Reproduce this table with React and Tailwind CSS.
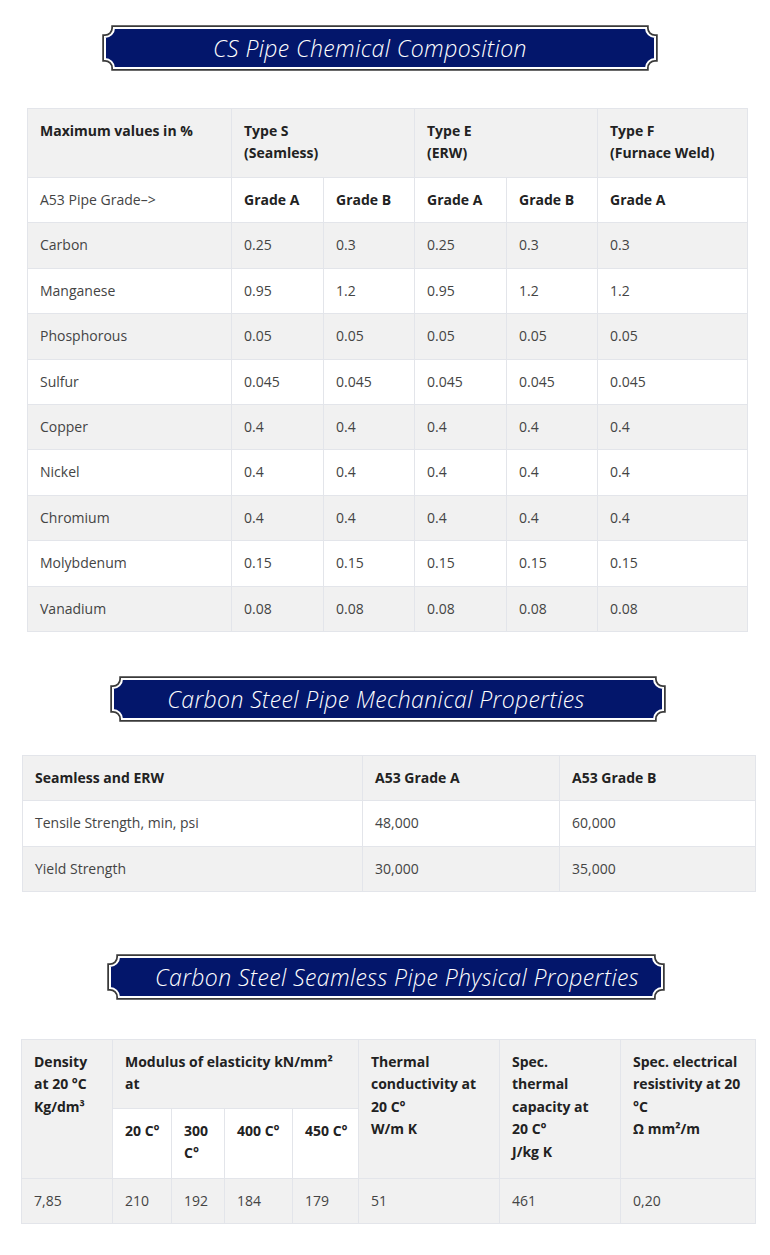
import React from "react";

const FONT = { fontFamily: '"Open Sans", "Liberation Sans", sans-serif' };

function Banner({ title, width, shift, textShift }) {
  const W = width;
  const H = 46;
  const o = 3;
  const r = 9;
  const d = `M ${o + r} ${o} L ${W - o - r} ${o} A ${r} ${r} 0 0 0 ${W - o} ${o + r} L ${W - o} ${H - o - r} A ${r} ${r} 0 0 0 ${W - o - r} ${H - o} L ${o + r} ${H - o} A ${r} ${r} 0 0 0 ${o} ${H - o - r} L ${o} ${o + r} A ${r} ${r} 0 0 0 ${o + r} ${o} Z`;
  return (
    <div className={`flex justify-center ${shift}`}>
      <div className="relative flex h-[46px] items-center justify-center" style={{ width: W }}>
        <svg className="absolute inset-0" width={W} height={H} viewBox={`0 0 ${W} ${H}`}>
          <path d={d} fill="none" stroke="#3a3a3a" strokeWidth="5.5" />
          <path d={d} fill="#03166b" stroke="#ffffff" strokeWidth="2" />
        </svg>
        <span
          className={`relative text-[23px] font-light italic tracking-[0.4px] text-white ${textShift}`}
          style={{ fontFamily: '"Open Sans", "Lato", sans-serif' }}
        >
          {title}
        </span>
      </div>
    </div>
  );
}

const cell = "border border-[#e3e5ea] px-3 py-[11px] align-top";
const th = `${cell} font-bold text-[#222]`;
const td = `${cell} text-[#444]`;
const sub = "border border-[#e3e5ea] pl-3 pr-[6px] py-[11px] align-top font-bold text-[#222] bg-white";

const chemRows = [
  ["Carbon", "0.25", "0.3", "0.25", "0.3", "0.3"],
  ["Manganese", "0.95", "1.2", "0.95", "1.2", "1.2"],
  ["Phosphorous", "0.05", "0.05", "0.05", "0.05", "0.05"],
  ["Sulfur", "0.045", "0.045", "0.045", "0.045", "0.045"],
  ["Copper", "0.4", "0.4", "0.4", "0.4", "0.4"],
  ["Nickel", "0.4", "0.4", "0.4", "0.4", "0.4"],
  ["Chromium", "0.4", "0.4", "0.4", "0.4", "0.4"],
  ["Molybdenum", "0.15", "0.15", "0.15", "0.15", "0.15"],
  ["Vanadium", "0.08", "0.08", "0.08", "0.08", "0.08"],
];

export default function App() {
  return (
    <div className="w-[770px] bg-white pt-[25px] pb-[31px] text-[14px] leading-[1.6]" style={FONT}>
      <Banner title="CS Pipe Chemical Composition" width={556} shift="pr-[10px]" textShift="mr-[20px]" />

      <div className="mt-[37px] pl-[27px]">
        <table className="w-[720px] table-fixed border-collapse text-left">
          <colgroup>
            <col className="w-[204px]" />
            <col className="w-[92px]" />
            <col className="w-[91px]" />
            <col className="w-[92px]" />
            <col className="w-[91px]" />
            <col className="w-[150px]" />
          </colgroup>
          <tbody>
            <tr className="h-[69px] bg-[#f1f1f1]">
              <td className={th}>Maximum values in %</td>
              <td className={th} colSpan={2}>Type S<br />(Seamless)</td>
              <td className={th} colSpan={2}>Type E<br />(ERW)</td>
              <td className={th}>Type F<br />(Furnace Weld)</td>
            </tr>
            <tr className="bg-white">
              <td className={td}>A53 Pipe Grade–&gt;</td>
              <td className={th}>Grade A</td>
              <td className={th}>Grade B</td>
              <td className={th}>Grade A</td>
              <td className={th}>Grade B</td>
              <td className={th}>Grade A</td>
            </tr>
            {chemRows.map((r, i) => (
              <tr key={r[0]} className={i % 2 === 0 ? "bg-[#f1f1f1]" : "bg-white"}>
                {r.map((c, j) => (
                  <td key={j} className={td}>{c}</td>
                ))}
              </tr>
            ))}
          </tbody>
        </table>
      </div>

      <div className="mt-[44px]">
        <Banner title="Carbon Steel Pipe Mechanical Properties" width={556} shift="pl-[6px]" textShift="mr-[24px]" />
      </div>

      <div className="mt-[33px] pl-[22px]">
        <table className="w-[733px] table-fixed border-collapse text-left">
          <colgroup>
            <col className="w-[340px]" />
            <col className="w-[197px]" />
            <col className="w-[196px]" />
          </colgroup>
          <tbody>
            <tr className="bg-[#f1f1f1]">
              <td className={th}>Seamless and ERW</td>
              <td className={th}>A53 Grade A</td>
              <td className={th}>A53 Grade B</td>
            </tr>
            <tr className="bg-white">
              <td className={td}>Tensile Strength, min, psi</td>
              <td className={td}>48,000</td>
              <td className={td}>60,000</td>
            </tr>
            <tr className="bg-[#f1f1f1]">
              <td className={td}>Yield Strength</td>
              <td className={td}>30,000</td>
              <td className={td}>35,000</td>
            </tr>
          </tbody>
        </table>
      </div>

      <div className="mt-[62px]">
        <Banner title="Carbon Steel Seamless Pipe Physical Properties" width={558} shift="pl-[2px]" textShift="ml-[22px]" />
      </div>

      <div className="mt-[39px] pl-[21px]">
        <table className="w-[734px] table-fixed border-collapse text-left">
          <colgroup>
            <col className="w-[91px]" />
            <col className="w-[59px]" />
            <col className="w-[53px]" />
            <col className="w-[68px]" />
            <col className="w-[66px]" />
            <col className="w-[141px]" />
            <col className="w-[121px]" />
            <col className="w-[135px]" />
          </colgroup>
          <tbody>
            <tr className="h-[69px] bg-[#f1f1f1]">
              <td className={th} rowSpan={2}>Density<br />at 20 °C<br />Kg/dm³</td>
              <td className={th} colSpan={4}>Modulus of elasticity kN/mm² at</td>
              <td className={th} rowSpan={2}>Thermal conductivity at 20 C°<br />W/m K</td>
              <td className={th} rowSpan={2}>Spec. thermal capacity at 20 C°<br />J/kg K</td>
              <td className={th} rowSpan={2}>Spec. electrical resistivity at 20 °C<br />Ω mm²/m</td>
            </tr>
            <tr className="h-[70px]">
              <td className={`${sub} whitespace-nowrap`}>20 C°</td>
              <td className={sub}>300 C°</td>
              <td className={`${sub} whitespace-nowrap`}>400 C°</td>
              <td className={`${sub} whitespace-nowrap`}>450 C°</td>
            </tr>
            <tr className="bg-[#f1f1f1]">
              <td className={td}>7,85</td>
              <td className={td}>210</td>
              <td className={td}>192</td>
              <td className={td}>184</td>
              <td className={td}>179</td>
              <td className={td}>51</td>
              <td className={td}>461</td>
              <td className={td}>0,20</td>
            </tr>
          </tbody>
        </table>
      </div>
    </div>
  );
}
